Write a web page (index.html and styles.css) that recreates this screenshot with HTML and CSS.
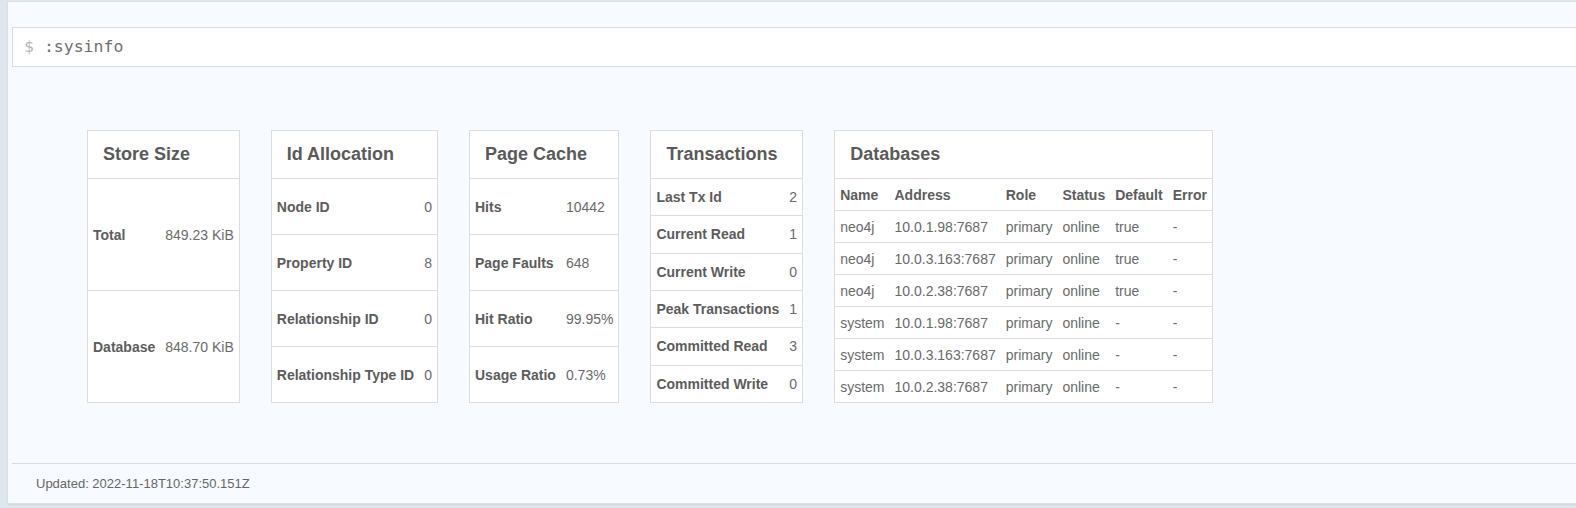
FILE: index.html
```html
<!DOCTYPE html>
<html>
<head>
<meta charset="utf-8">
<link rel="stylesheet" href="styles.css">
</head>
<body>
<div class="panel">
  <div class="cmd"><span class="prompt">$</span> <span class="cmd-text">:sysinfo</span></div>
  <div class="content">
    <div class="card card-2">
      <div class="card-title">Store Size</div>
      <div class="c lbl">Total</div><div class="c val">849.23 KiB</div>
      <div class="c lbl">Database</div><div class="c val">848.70 KiB</div>
    </div>
    <div class="card card-2">
      <div class="card-title">Id Allocation</div>
      <div class="c lbl">Node ID</div><div class="c val">0</div>
      <div class="c lbl">Property ID</div><div class="c val">8</div>
      <div class="c lbl">Relationship ID</div><div class="c val">0</div>
      <div class="c lbl">Relationship Type ID</div><div class="c val">0</div>
    </div>
    <div class="card card-2">
      <div class="card-title">Page Cache</div>
      <div class="c lbl">Hits</div><div class="c val">10442</div>
      <div class="c lbl">Page Faults</div><div class="c val">648</div>
      <div class="c lbl">Hit Ratio</div><div class="c val">99.95%</div>
      <div class="c lbl">Usage Ratio</div><div class="c val">0.73%</div>
    </div>
    <div class="card card-2">
      <div class="card-title">Transactions</div>
      <div class="c lbl">Last Tx Id</div><div class="c val">2</div>
      <div class="c lbl">Current Read</div><div class="c val">1</div>
      <div class="c lbl">Current Write</div><div class="c val">0</div>
      <div class="c lbl">Peak Transactions</div><div class="c val">1</div>
      <div class="c lbl">Committed Read</div><div class="c val">3</div>
      <div class="c lbl">Committed Write</div><div class="c val">0</div>
    </div>
    <div class="card card-6">
      <div class="card-title">Databases</div>
      <div class="c lbl db">Name</div><div class="c lbl db">Address</div><div class="c lbl db">Role</div><div class="c lbl db">Status</div><div class="c lbl db">Default</div><div class="c lbl db">Error</div>
      <div class="c val db">neo4j</div><div class="c val db">10.0.1.98:7687</div><div class="c val db">primary</div><div class="c val db">online</div><div class="c val db">true</div><div class="c val db">-</div>
      <div class="c val db">neo4j</div><div class="c val db">10.0.3.163:7687</div><div class="c val db">primary</div><div class="c val db">online</div><div class="c val db">true</div><div class="c val db">-</div>
      <div class="c val db">neo4j</div><div class="c val db">10.0.2.38:7687</div><div class="c val db">primary</div><div class="c val db">online</div><div class="c val db">true</div><div class="c val db">-</div>
      <div class="c val db">system</div><div class="c val db">10.0.1.98:7687</div><div class="c val db">primary</div><div class="c val db">online</div><div class="c val db">-</div><div class="c val db">-</div>
      <div class="c val db">system</div><div class="c val db">10.0.3.163:7687</div><div class="c val db">primary</div><div class="c val db">online</div><div class="c val db">-</div><div class="c val db">-</div>
      <div class="c val db">system</div><div class="c val db">10.0.2.38:7687</div><div class="c val db">primary</div><div class="c val db">online</div><div class="c val db">-</div><div class="c val db">-</div>
    </div>
  </div>
  <div class="footer">Updated: 2022-11-18T10:37:50.151Z</div>
</div>
</body>
</html>
```

FILE: styles.css
```css
html, body {
  margin: 0;
  padding: 0;
}
body {
  background: #dfe6ee;
  font-family: "Liberation Sans", Arial, Helvetica, sans-serif;
  overflow: hidden;
  width: 1576px;
  height: 508px;
}
.panel {
  box-sizing: border-box;
  margin: 1px 0 0 7px;
  width: 1600px;
  height: 503px;
  background: #f7fafe;
  border: 1px solid #d8e0e9;
  border-radius: 2px;
  box-shadow: 0 1px 2px rgba(0, 0, 0, 0.06);
  padding: 25px 0 0 4px;
  display: flex;
  flex-direction: column;
}
.cmd {
  box-sizing: border-box;
  height: 40px;
  line-height: 38px;
  background: #fff;
  border: 1px solid #d3dce7;
  border-right: none;
  padding-left: 11px;
  font-family: "DejaVu Sans Mono", "Liberation Mono", monospace;
  font-size: 16.5px;
  color: #707070;
  white-space: pre;
}
.prompt {
  color: #b8b8b8;
}
.content {
  display: flex;
  align-items: stretch;
  gap: 31px;
  padding: 63px 0 0 75px;
}
.card {
  display: grid;
  grid-template-rows: 47px;
  grid-auto-rows: 1fr;
  background: #fff;
  border: 1px solid #dcdcdc;
  color: #5c5c5c;
  font-size: 14px;
}
.card-2 {
  grid-template-columns: auto auto;
}
.card-6 {
  grid-template-columns: repeat(6, auto);
}
.card-title {
  grid-column: 1 / -1;
  display: flex;
  align-items: center;
  padding-left: 15px;
  font-size: 18px;
  font-weight: bold;
  color: #5a5a5a;
}
.c {
  box-sizing: border-box;
  display: flex;
  align-items: center;
  padding: 0 5px;
  border-top: 1px solid #dcdcdc;
  white-space: nowrap;
}
.lbl {
  font-weight: bold;
  color: #5c5c5c;
}
.val {
  color: #6a6a6a;
}
.db {
  min-height: 32px;
}
.footer {
  margin-top: 60px;
  border-top: 1px solid #d6dce3;
  padding: 11px 0 0 24px;
  font-size: 13px;
  line-height: 18px;
  color: #666;
}
```
